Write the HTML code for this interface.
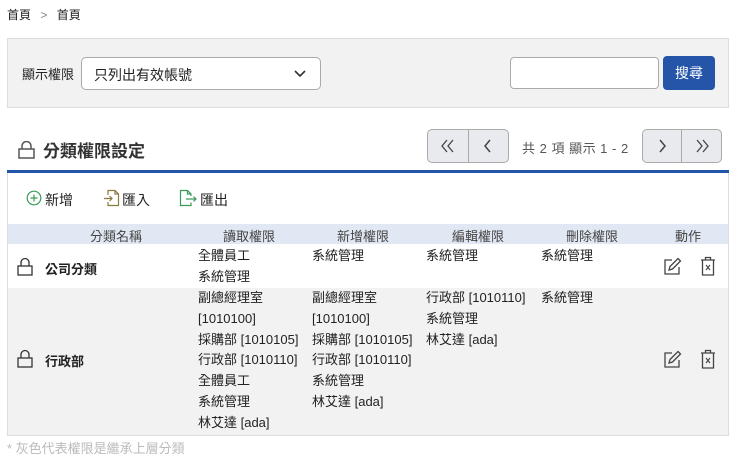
<!DOCTYPE html>
<html><head><meta charset="utf-8"><style>
*{box-sizing:border-box;margin:0;padding:0}
body{width:735px;height:465px;background:#fff;font-family:"Liberation Sans","Noto Sans CJK TC",sans-serif;color:#222;position:relative;overflow:hidden;font-size:13px}
.a{position:absolute;white-space:nowrap}
.btn{position:absolute;background:#e8eaed;border:1px solid #aaa;height:34px}
.cell{position:absolute;line-height:20.8px;font-size:13px;white-space:nowrap}
</style></head><body>
<div class="a" style="left:7px;top:6px;font-size:12px">首頁 <span style="color:#888;margin:0 6px">&gt;</span> 首頁</div>
<div class="a" style="left:7px;top:38px;width:722px;height:70px;background:#f2f2f2;border:1px solid #ddd"></div>
<div class="a" style="left:22px;top:64px;font-size:13px">顯示權限</div>
<div class="a" style="left:81px;top:57px;width:240px;height:33px;background:#fff;border:1px solid #aaa;border-radius:5px;padding:7px 12px;font-size:14px">只列出有效帳號
<svg style="position:absolute;right:14px;top:12px" width="12" height="8" viewBox="0 0 12 8"><path d="M1 1l5 5 5-5" fill="none" stroke="#333" stroke-width="1.6"/></svg></div>
<div class="a" style="left:510px;top:57px;width:149px;height:32px;background:#fff;border:1px solid #aaa;border-radius:4px"></div>
<div class="a" style="left:663px;top:56px;width:52px;height:34px;background:#2455a8;border-radius:4px;color:#fff;font-size:14px;text-align:center;line-height:34px">搜尋</div>

<svg class="a" style="left:18px;top:141px" width="17" height="18" viewBox="0 0 17 18"><path d="M4 8V5a4.5 4.5 0 0 1 9 0v3" fill="none" stroke="#555" stroke-width="1.5"/><rect x="1" y="8" width="15" height="9" fill="none" stroke="#555" stroke-width="1.5"/></svg>
<div class="a" style="left:43px;top:137px;font-size:17px;font-weight:bold;color:#333">分類權限設定</div>

<div class="btn" style="left:427px;top:129px;width:42px;border-radius:5px 0 0 5px"><svg width="40" height="32" viewBox="0 0 40 32"><path d="M19 10l-5 6 5 6M25 10l-5 6 5 6" fill="none" stroke="#444" stroke-width="1.3"/></svg></div>
<div class="btn" style="left:468px;top:129px;width:41px;border-radius:0 5px 5px 0"><svg width="39" height="32" viewBox="0 0 39 32"><path d="M21 10l-5 6 5 6" fill="none" stroke="#444" stroke-width="1.5"/></svg></div>
<div class="a" style="left:522px;top:138px;font-size:13px;color:#555;letter-spacing:0.5px">共 2 項 顯示 1 - 2</div>
<div class="btn" style="left:642px;top:129px;width:40px;border-radius:5px 0 0 5px"><svg width="38" height="32" viewBox="0 0 38 32"><path d="M17 10l5 6-5 6" fill="none" stroke="#444" stroke-width="1.5"/></svg></div>
<div class="btn" style="left:681px;top:129px;width:41px;border-radius:0 5px 5px 0"><svg width="39" height="32" viewBox="0 0 39 32"><path d="M15 10l5 6-5 6M21 10l5 6-5 6" fill="none" stroke="#444" stroke-width="1.3"/></svg></div>

<div class="a" style="left:7px;top:170px;width:722px;height:3px;background:#2455a8"></div>
<div class="a" style="left:7px;top:173px;width:722px;height:263px;border:1px solid #ddd;border-top:none"></div>

<svg class="a" style="left:26px;top:190px" width="16" height="16" viewBox="0 0 16 16"><circle cx="8" cy="8" r="6.8" fill="none" stroke="#3a9a5a" stroke-width="1.2"/><path d="M8 4.5v7M4.5 8h7" stroke="#3a9a5a" stroke-width="1.2"/></svg>
<div class="a" style="left:45px;top:190px;font-size:14px">新增</div>
<svg class="a" style="left:103px;top:189px" width="18" height="18" viewBox="0 0 18 18"><path d="M5 6V1.5h7l3.5 3.5v11.5H5V13" fill="none" stroke="#8a7a40" stroke-width="1.2"/><path d="M12 1.5v3.5h3.5M1 9.5h8M6.5 7l2.5 2.5-2.5 2.5" fill="none" stroke="#8a7a40" stroke-width="1.2"/></svg>
<div class="a" style="left:122px;top:190px;font-size:14px">匯入</div>
<svg class="a" style="left:179px;top:189px" width="18" height="18" viewBox="0 0 18 18"><path d="M12 7V5L8.5 1.5H1.5v15H12v-3" fill="none" stroke="#3a9a5a" stroke-width="1.2"/><path d="M8.5 1.5V5H12M7 10h10M14.5 7.5L17 10l-2.5 2.5" fill="none" stroke="#3a9a5a" stroke-width="1.2"/></svg>
<div class="a" style="left:200px;top:190px;font-size:14px">匯出</div>

<div class="a" style="left:8px;top:224px;width:720px;height:20px;background:#e2e8f3"></div>
<div class="a" style="top:226px;left:90px;font-size:13px;color:#444">分類名稱</div>
<div class="a" style="top:226px;left:223px;font-size:13px;color:#444">讀取權限</div>
<div class="a" style="top:226px;left:337px;font-size:13px;color:#444">新增權限</div>
<div class="a" style="top:226px;left:452px;font-size:13px;color:#444">編輯權限</div>
<div class="a" style="top:226px;left:566px;font-size:13px;color:#444">刪除權限</div>
<div class="a" style="top:226px;left:675px;font-size:13px;color:#444">動作</div>

<div class="a" style="left:8px;top:288px;width:720px;height:147px;background:#f2f2f2"></div>

<svg class="a" style="left:17px;top:257px" width="16" height="19" viewBox="0 0 16 19"><path d="M4 9V5.5a4 4 0 0 1 8 0V9" fill="none" stroke="#333" stroke-width="1.3"/><rect x="1" y="9" width="14" height="9" fill="none" stroke="#333" stroke-width="1.3"/></svg>
<div class="a" style="left:45px;top:259px;font-weight:bold;font-size:13px">公司分類</div>
<div class="cell" style="left:198px;top:246px">全體員工<br>系統管理</div>
<div class="cell" style="left:312px;top:246px">系統管理</div>
<div class="cell" style="left:426px;top:246px">系統管理</div>
<div class="cell" style="left:541px;top:246px">系統管理</div>

<svg class="a" style="left:17px;top:349px" width="16" height="19" viewBox="0 0 16 19"><path d="M4 9V5.5a4 4 0 0 1 8 0V9" fill="none" stroke="#333" stroke-width="1.3"/><rect x="1" y="9" width="14" height="9" fill="none" stroke="#333" stroke-width="1.3"/></svg>
<div class="a" style="left:45px;top:351px;font-weight:bold;font-size:13px">行政部</div>
<div class="cell" style="left:198px;top:288px">副總經理室<br>[1010100]<br>採購部 [1010105]<br>行政部 [1010110]<br>全體員工<br>系統管理<br>林艾達 [ada]</div>
<div class="cell" style="left:312px;top:288px">副總經理室<br>[1010100]<br>採購部 [1010105]<br>行政部 [1010110]<br>系統管理<br>林艾達 [ada]</div>
<div class="cell" style="left:426px;top:288px">行政部 [1010110]<br>系統管理<br>林艾達 [ada]</div>
<div class="cell" style="left:541px;top:288px">系統管理</div>

<svg class="a" style="left:663px;top:257px" width="19" height="19" viewBox="0 0 19 19"><path d="M9 3H2v14h14v-7" fill="none" stroke="#444" stroke-width="1.3"/><path d="M15 1.5l2.5 2.5-8 8-3.5 1 1-3.5z" fill="none" stroke="#444" stroke-width="1.3"/></svg>
<svg class="a" style="left:700px;top:256px" width="16" height="20" viewBox="0 0 16 20"><path d="M1 4h14M5.5 4V1.5h5V4M2.5 4v15h11V4" fill="none" stroke="#444" stroke-width="1.3"/><path d="M6 9l4 5M10 9l-4 5" stroke="#444" stroke-width="1.1"/></svg>
<svg class="a" style="left:663px;top:350px" width="19" height="19" viewBox="0 0 19 19"><path d="M9 3H2v14h14v-7" fill="none" stroke="#444" stroke-width="1.3"/><path d="M15 1.5l2.5 2.5-8 8-3.5 1 1-3.5z" fill="none" stroke="#444" stroke-width="1.3"/></svg>
<svg class="a" style="left:700px;top:349px" width="16" height="20" viewBox="0 0 16 20"><path d="M1 4h14M5.5 4V1.5h5V4M2.5 4v15h11V4" fill="none" stroke="#444" stroke-width="1.3"/><path d="M6 9l4 5M10 9l-4 5" stroke="#444" stroke-width="1.1"/></svg>

<div class="a" style="left:7px;top:438px;font-size:13px;color:#bbb">* 灰色代表權限是繼承上層分類</div>
</body></html>
